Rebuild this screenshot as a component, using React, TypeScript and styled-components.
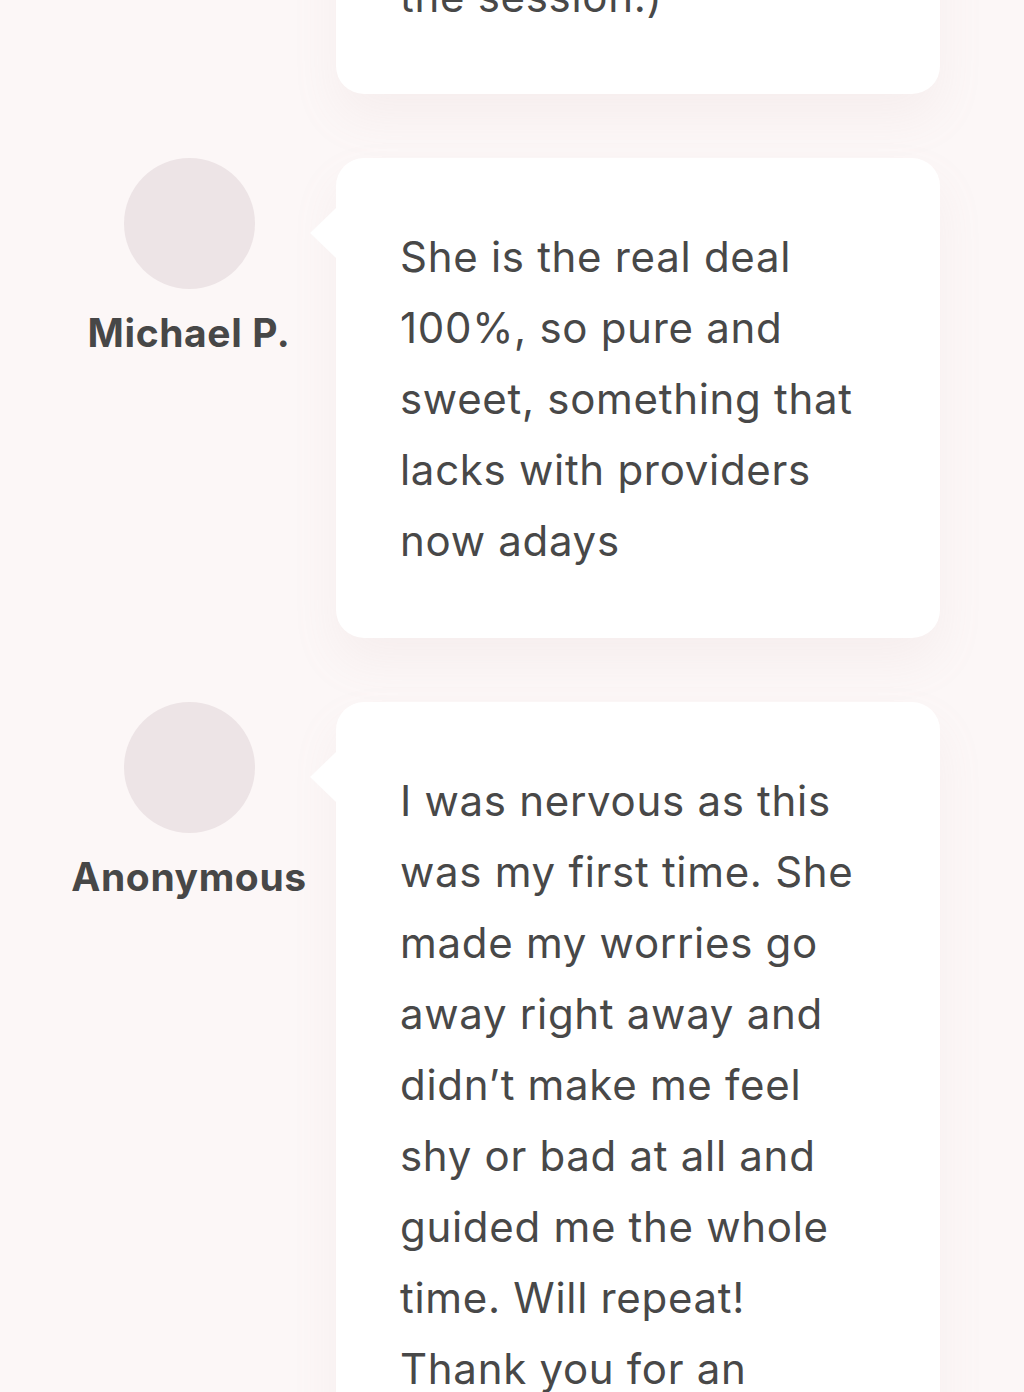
import styled, { createGlobalStyle } from "styled-components";

const GlobalStyle = createGlobalStyle`
  html, body {
    margin: 0;
    padding: 0;
    background: #fcf7f7;
  }
  body {
    font-family: "Inter", "Liberation Sans", sans-serif;
    color: #484848;
    overflow: hidden;
  }
`;

// list of testimonials, first one is scrolled mostly out of view
const List = styled.section`
  display: flex;
  flex-direction: column;
  gap: 64px;
  padding-left: 54px;
  margin-top: -386px;
`;

const Review = styled.article`
  display: grid;
  grid-template-columns: 270px 604px;
  column-gap: 12px;
  align-items: start;
`;

const Author = styled.div`
  display: flex;
  flex-direction: column;
  align-items: center;
`;

const Avatar = styled.div`
  width: 131px;
  height: 131px;
  border-radius: 50%;
  background: #ede4e6;
`;

const Name = styled.div`
  margin-top: 21px;
  font-size: 39px;
  line-height: 1.2;
  font-weight: 700;
  letter-spacing: 0.6px;
  color: #474747;
  white-space: nowrap;
`;

const Card = styled.div`
  position: relative;
  background: #ffffff;
  border-radius: 28px;
  padding: 63px 64px 62px;
  box-shadow: 0 24px 48px rgba(190, 150, 150, 0.09);

  /* little speech pointer toward the avatar */
  &::before {
    content: "";
    position: absolute;
    left: -26px;
    top: 50px;
    border-top: 25px solid transparent;
    border-bottom: 25px solid transparent;
    border-right: 26px solid #ffffff;
  }
`;

const Text = styled.p`
  margin: 0;
  font-size: 42px;
  line-height: 71px;
  letter-spacing: 0.7px;
  font-weight: 400;
  color: #484848;
`;

const reviews = [
  {
    name: "Jason R.",
    text: "Amazing energy, very attentive and made sure I was comfortable throughout the\u00A0session.)",
  },
  {
    name: "Michael P.",
    text: "She is the real deal 100%, so pure and sweet, something that lacks with providers now adays",
  },
  {
    name: "Anonymous",
    text: "I was nervous as this was my first time. She made my worries go away right away and didn’t make me feel shy or bad at all and guided me the whole time. Will repeat! Thank you for an amazing experience.",
  },
];

const App = () => {
  return (
    <>
      <GlobalStyle />
      <List>
        {reviews.map((r) => (
          <Review key={r.name}>
            <Author>
              <Avatar />
              <Name>{r.name}</Name>
            </Author>
            <Card>
              <Text>{r.text}</Text>
            </Card>
          </Review>
        ))}
      </List>
    </>
  );
};

export default App;
